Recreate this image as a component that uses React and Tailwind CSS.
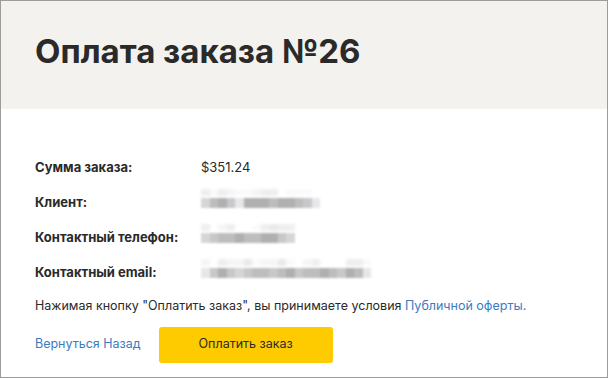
import React from 'react';

const rows = [
  { label: 'Сумма заказа:', value: '$351.24' },
  { label: 'Клиент:', blur: [3, 5, 6, 4, 2, 6, 6, 6, 5, 6, 6, 5, 4, 2] },
  { label: 'Контактный телефон:', blur: [3, 4, 5, 5, 6, 5, 5, 6, 6, 4, 3] },
  { label: 'Контактный email:', blur: [2, 4, 6, 4, 3, 4, 5, 5, 4, 5, 6, 4, 5, 5, 6, 5, 4, 6, 5, 2] },
];

const shades = ['bg-white', 'bg-gray-100', 'bg-gray-200', 'bg-[#d6d6d6]', 'bg-[#c8c8c8]', 'bg-[#bdbdbd]', 'bg-[#b0b0b0]'];

function Blurred({ cells }) {
  return (
    <div className="relative">
      <div className="absolute -top-[9px] left-0 flex h-[7px] blur-[1.5px] opacity-40">
        {cells.map((c, i) => (
          <div key={i} className={`w-[8.5px] h-full ${shades[(c + i) % 5]}`} />
        ))}
      </div>
      <div className="flex h-[10px] blur-[1px]">
        {cells.map((c, i) => (
          <div key={i} className={`w-[8.5px] h-full ${shades[c]}`} />
        ))}
      </div>
    </div>
  );
}

export default function App() {
  return (
    <div
      className="w-[608px] h-[378px] border border-[#9c9c9c] bg-white overflow-hidden"
      style={{ fontFamily: 'Inter, "Liberation Sans", sans-serif' }}
    >
      <div className="h-[108px] bg-[#f4f2ef] pl-[34px] pt-[32px]">
        <h1 className="text-[33px] font-bold text-[#2a2a2a] leading-[36px]">
          Оплата заказа №26
        </h1>
      </div>

      <div className="pl-[34px] pt-[51px]">
        <div className="flex flex-col gap-[19px]">
          {rows.map((r) => (
            <div key={r.label} className="flex items-center h-[16px]">
              <div className="w-[166px] text-[13px] font-bold text-[#2a2a2a]">{r.label}</div>
              {r.value ? (
                <div className="text-[13px] text-[#2a2a2a]">{r.value}</div>
              ) : (
                <Blurred cells={r.blur} />
              )}
            </div>
          ))}
        </div>

        <p className="mt-[16px] text-[12.5px] text-[#2a2a2a]">
          Нажимая кнопку "Оплатить заказ", вы принимаете условия{' '}
          <a className="text-[#3b7bbf]">Публичной оферты.</a>
        </p>

        <div className="mt-[11px] flex items-center gap-[18px]">
          <a className="text-[12.5px] text-[#3b7bbf]">Вернуться Назад</a>
          <button className="w-[174px] h-[36px] rounded-[3px] bg-[#fdcb00] text-[12.5px] text-[#2a2a2a]">
            Оплатить заказ
          </button>
        </div>
      </div>
    </div>
  );
}
